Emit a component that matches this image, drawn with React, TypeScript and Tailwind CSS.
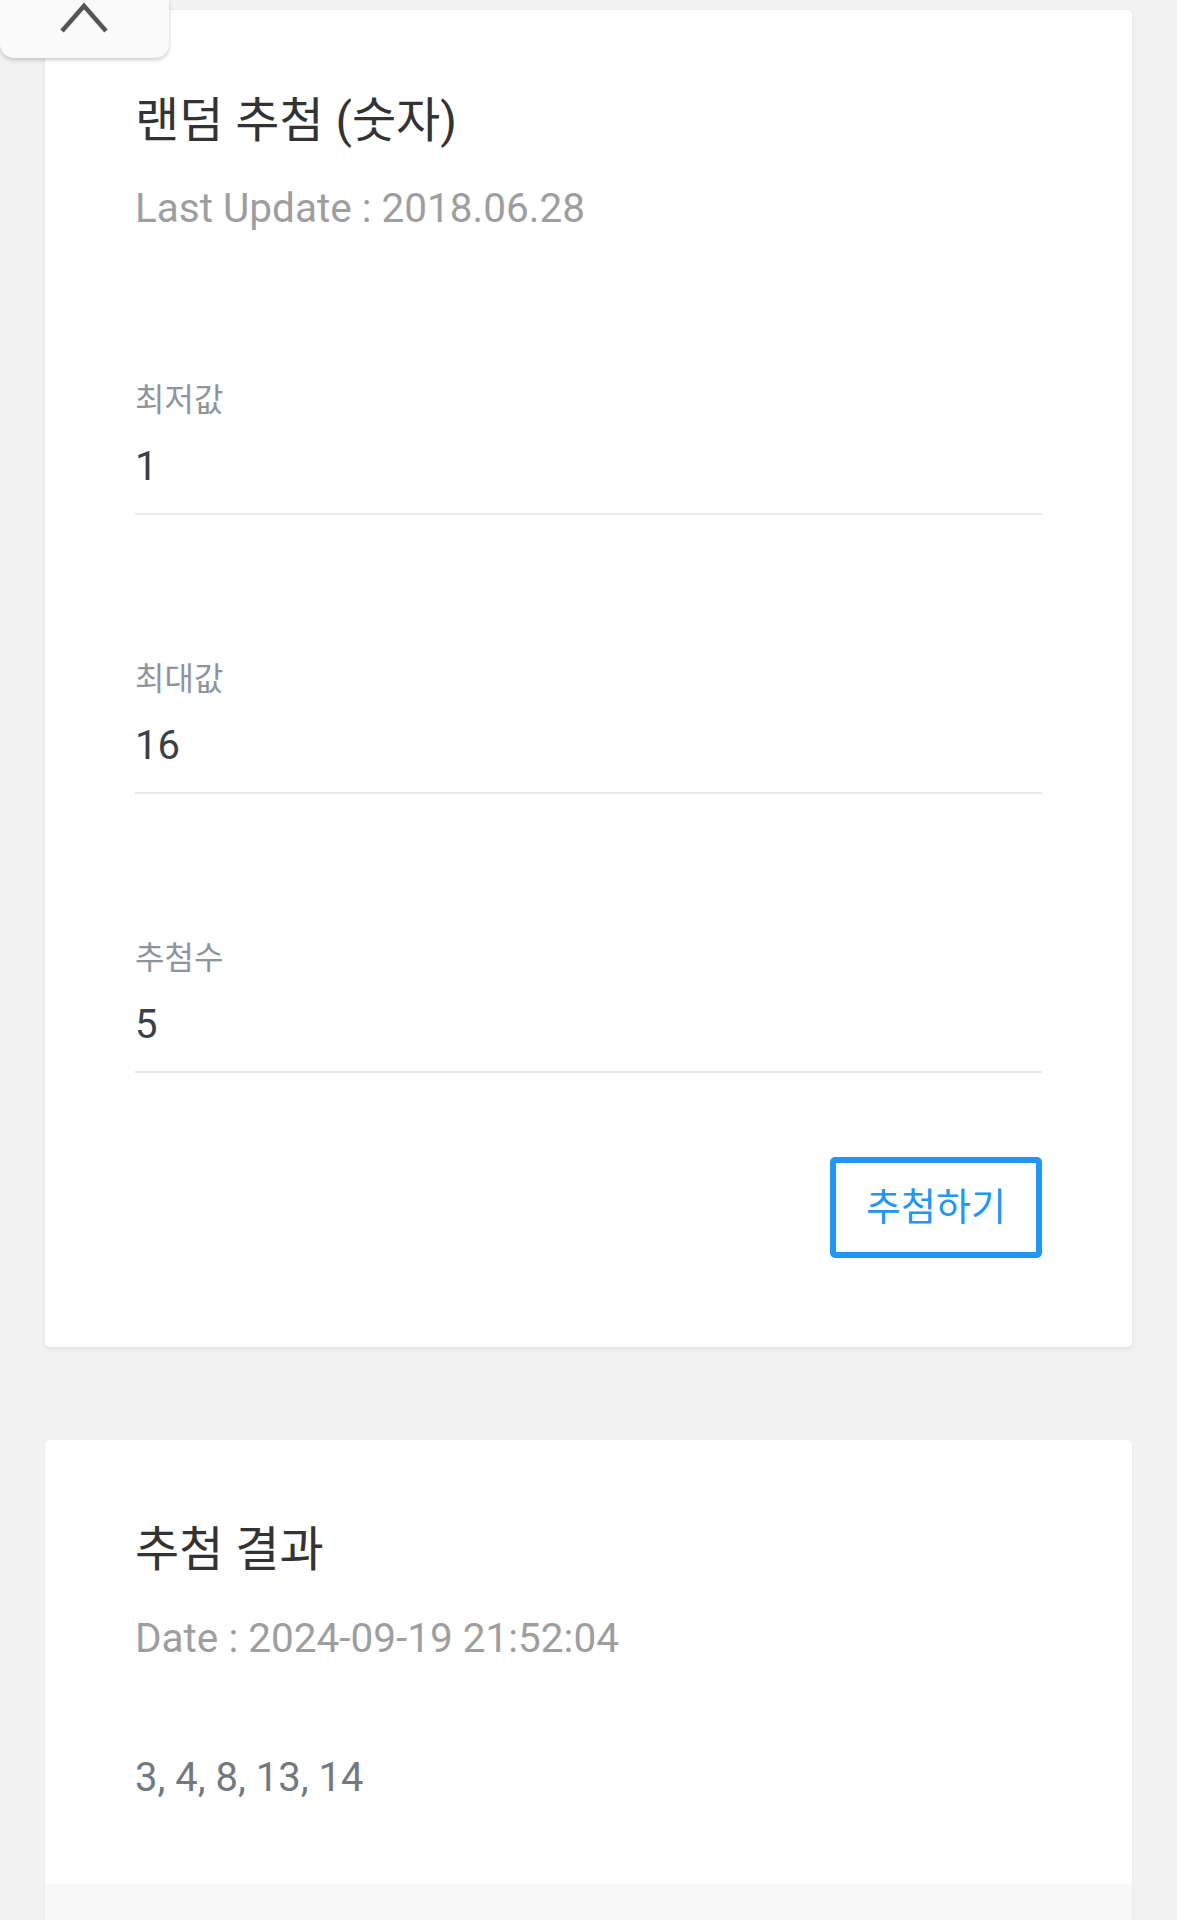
import React from 'react';

const font = { fontFamily: 'Roboto, "Noto Sans CJK KR", sans-serif' };

const Field: React.FC<{ label: string; value: string; first?: boolean }> = ({ label, value, first }) => (
  <div className={`${first ? 'mt-[147px]' : 'mt-[144px]'} border-b-2 border-[#e6eaee] pb-[21px]`}>
    <div className="text-[32px] leading-[40px] text-[#8d949c]">{label}</div>
    <div className="mt-[22px] text-[40px] leading-[50px] text-[#3a4047]">{value}</div>
  </div>
);

export default function App() {
  return (
    <div className="min-h-[1920px] bg-[#f2f2f2] relative overflow-hidden" style={font}>
      {/* collapse tab */}
      <div className="absolute left-0 top-0 z-10 w-[169px] h-[58px] bg-[#fafafa] rounded-b-[14px] shadow-[0_2px_4px_rgba(0,0,0,0.2)]">
        <svg className="absolute left-[59px] top-[2px]" width="50" height="32" viewBox="0 0 50 32">
          <polyline points="3,29 25,4 47,29" fill="none" stroke="#555555" strokeWidth="4.5" />
        </svg>
      </div>

      <div className="pt-[10px] px-[45px]">
        {/* input card */}
        <div className="bg-white rounded-[5px] shadow-[0_2px_5px_rgba(0,0,0,0.08)] px-[90px] pt-[81px] pb-[89px]">
          <h1 className="text-[48px] leading-[60px] text-[#333333]">랜덤 추첨 (숫자)</h1>
          <div className="mt-[32px] text-[40.5px] leading-[50px] text-[#9e9e9e]">Last Update : 2018.06.28</div>

          <Field first label="최저값" value="1" />
          <Field label="최대값" value="16" />
          <Field label="추첨수" value="5" />

          <div className="flex justify-end mt-[84px]">
            <button className="w-[212px] h-[101px] border-[6px] border-[#2196f3] rounded-[5px] text-[38px] text-[#2196f3] flex items-center justify-center">
              추첨하기
            </button>
          </div>
        </div>

        {/* result card */}
        <div className="mt-[93px] bg-white rounded-t-[5px] shadow-[0_1px_3px_rgba(0,0,0,0.06)]">
          <div className="px-[90px] pt-[80px] pb-[81px]">
            <h2 className="text-[48px] leading-[60px] text-[#333333]">추첨 결과</h2>
            <div className="mt-[33px] text-[40.5px] leading-[50px] text-[#9e9e9e]">Date : 2024-09-19 21:52:04</div>
            <div className="mt-[90px] text-[40px] leading-[50px] text-[#737980]">3, 4, 8, 13, 14</div>
          </div>
          <div className="h-[60px] bg-[#f8f8f8]" />
        </div>
      </div>
    </div>
  );
}
